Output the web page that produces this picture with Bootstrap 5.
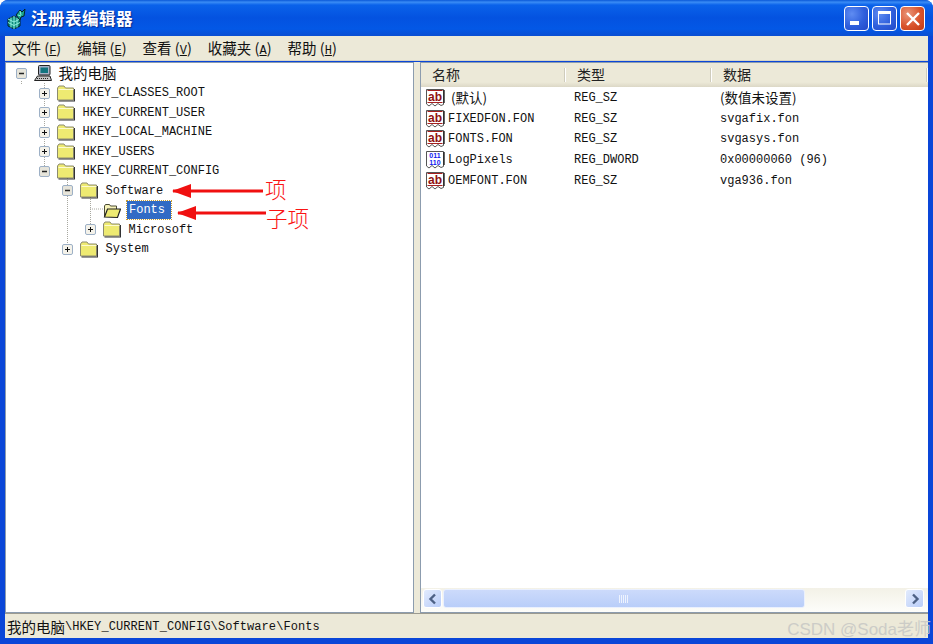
<!DOCTYPE html>
<html lang="zh">
<head>
<meta charset="utf-8">
<title>注册表编辑器</title>
<link href="https://cdn.jsdelivr.net/npm/bootstrap@5.3.0/dist/css/bootstrap.min.css" rel="stylesheet">
<style>
html,body{height:644px;overflow:hidden;background:#fff}
body{font-family:"Liberation Mono","Noto Sans CJK SC",monospace;font-size:12px;color:#111}
.cjk{font-family:"Noto Sans CJK SC",sans-serif}
.xpwin{height:644px;width:933px;position:relative;overflow:hidden;border-radius:8px 8px 0 0;
 background:#0a46d8;padding:0 5px 6px 5px}
.xptitle{height:36px;margin:0 -5px;padding:0 8px 0 7px;
 background:linear-gradient(180deg,#0a58d8 0,#3a8cf5 6%,#0a62ea 14%,#0452e0 50%,#0358e6 80%,#0a4ed2 100%);}
.xptitle .ttl{font-size:16.5px;font-weight:700;color:#fff;text-shadow:1px 1px 1px #0a2a90;margin-left:5px;letter-spacing:.5px;padding-top:1px}
.capbtn{width:25px;height:25px;border:1px solid #fff;border-radius:4px;margin-left:3px;
 background:radial-gradient(circle at 30% 30%,#5f8cf2 0,#2f5fdc 55%,#2148c8 100%)}
.capbtn.cls{background:radial-gradient(circle at 30% 30%,#e9967a 0,#d9532c 55%,#c23a14 100%)}
.xpmenu{height:25px;background:#ece9d8;padding-left:7px;font-size:14.5px;border-bottom:1px solid #d8d4c4;margin-bottom:1px}
.xpmenu span.mi{margin-right:16px;white-space:nowrap}
.xpmenu u{font-family:"Liberation Mono",monospace;font-size:12px}
.panes{height:551px;background:#ece9d8}
.leftpane{width:409px;background:#fff;border:1px solid #8c9cae;position:relative;padding-top:1px}
.rightpane{width:508px;margin-left:6px;background:#fff;border:1px solid #8c9cae;border-right:0;position:relative}
.trow{height:19.5px;white-space:nowrap}
.lv0{padding-left:10px}.lv1{padding-left:33px}.lv2{padding-left:56px}.lv3{padding-left:79px}
.exp{width:11px;height:11px;flex:none;margin-right:7px}
.exp.none{visibility:hidden}
.ticon{width:18px;height:17px;flex:none;margin-right:7.500px}
.sel{background:#316ac5;color:#fff;outline:1px dotted #c69a2e;padding:0 6px 0 2px;margin-left:-1.500px;line-height:18px}
.conn{position:absolute;left:0;top:0;pointer-events:none}
.lhead{height:24px;padding-bottom:2px;background:linear-gradient(180deg,#ece9d8 0,#ece9d8 80%,#dcd8c6 100%);font-size:14px;color:#222}
.hc{height:100%;padding-left:11px;position:relative}
.hc::after{content:"";position:absolute;right:0;top:5px;bottom:3px;width:2px;background:#cfccbc;border-right:1px solid #fff}
.h1c{width:145px}.h2c{width:146px}
.lrow{height:20.75px;white-space:nowrap}
.ric{width:21px;height:20px;flex:none;margin:0 2px 0 4px}
.cname{width:126px;flex:none}
.ctype{width:146px;flex:none}
.listbody{height:501px;padding-top:.5px}
.hscroll{height:24px;padding:0 4px 3px 2px;background:linear-gradient(180deg,#f3f1e7 0,#fdfdfa 100%)}
.sbtn{width:19px;height:19px;border:1px solid #fff;border-radius:3px;background:linear-gradient(135deg,#e2ebfd,#b9cdf8)}
.sthumb{width:362px;height:19px;margin-left:1px;border:1px solid #eaf0fe;border-radius:3px;background:linear-gradient(180deg,#ccdafb,#b9cef9)}
.xpstatus{height:25px;background:#ece9d8;padding-left:2px;padding-top:2px;border-top:1px solid #9b9a90}
.xpstatus .cjk{font-size:14.5px}
.xpstatus .stpath{letter-spacing:.08px}
.wmark{position:absolute;right:2px;bottom:2px;font-family:"Liberation Sans","Noto Sans CJK SC",sans-serif;font-size:17px;color:#c9c9c6;opacity:.9;white-space:nowrap}
.note{position:absolute;color:#fa1414;font-size:21.500px;font-weight:300;line-height:1}
.arrow{position:absolute;left:0;top:0;pointer-events:none}
.n1{left:259px;top:115px}
.n2{left:260px;top:144px}
.tree-root{font-size:14.5px;margin-left:-1px;margin-top:-2px}
.first-name{font-size:13.500px;padding-left:3px;margin-top:-2px}
.nodata{font-size:13.500px;margin-top:-2px}
</style>
</head>
<body>
<svg width="0" height="0" class="position-absolute">
<defs>
<symbol id="plus" viewBox="0 0 11 11"><rect x=".5" y=".5" width="10" height="10" rx="1.5" fill="#f4f2ea" stroke="#9db0c6"/><path d="M3 5.5h5M5.5 3v5" stroke="#111" stroke-width="1"/></symbol>
<symbol id="minus" viewBox="0 0 11 11"><rect x=".5" y=".5" width="10" height="10" rx="1.5" fill="#e6e4da" stroke="#9db0c6"/><path d="M3 5.5h5" stroke="#222" stroke-width="1.300"/></symbol>
<symbol id="folder" viewBox="0 0 18 17"><path d="M.5 15V3l1.500-2h5l1.500 2h8v12z" fill="#eeea72" stroke="#8c8b70"/><path d="M1.500 4.500h15" stroke="#fdfbd0"/><path d="M17.500 4v12H1.500" fill="none" stroke="#333" stroke-width="1.100"/></symbol>
<symbol id="folderopen" viewBox="0 0 18 17"><path d="M1.500 14V4l1-1.500h4l1 1.500h6v3" fill="#f6f2b8" stroke="#4a4a34"/><path d="M1.500 15l3-8h13l-3 8.500z" fill="#eeea72" stroke="#222" stroke-width="1.200"/></symbol>
<symbol id="pc" viewBox="0 0 18 17"><rect x="4.500" y=".5" width="11.500" height="9.500" rx="1" fill="#a9b2c6" stroke="#222"/><rect x="6.500" y="2.500" width="7.500" height="5.500" fill="#11747f"/><path d="M.5 15.500l3-4.500h12.500l1.500 4.500z" fill="#c4c4c4" stroke="#222"/><path d="M3 13.500h12" stroke="#222" stroke-dasharray="1 1"/></symbol>
<symbol id="abi" viewBox="0 0 21 20"><path d="M1.500 1.500h17v15l-2.500 1-3-2-3 2.500-3-2.500-3 2.500-2.500-2z" fill="#fff" stroke="#555"/><path d="M2.500 2.500h15M2.500 14.500h15" stroke="#a52020" stroke-width="1.200"/><path d="M19 2v13" stroke="#222" stroke-width="1.400"/><text x="10" y="12.500" text-anchor="middle" font-family="Liberation Sans,sans-serif" font-size="12" font-weight="700" fill="#8f1212">ab</text></symbol>
<symbol id="bini" viewBox="0 0 21 20"><path d="M1.500 1.500h17v15l-2.500 1-3-2-3 2.500-3-2.500-3 2.500-2.500-2z" fill="#fff" stroke="#555"/><path d="M19 2v13" stroke="#222" stroke-width="1.400"/><text x="10" y="8" text-anchor="middle" font-family="Liberation Sans,sans-serif" font-size="7" font-weight="700" fill="#1020f0">011</text><text x="10" y="14.500" text-anchor="middle" font-family="Liberation Sans,sans-serif" font-size="7" font-weight="700" fill="#1020f0">110</text></symbol>
</defs>
</svg>

<div class="xpwin d-flex flex-column">
  <div class="xptitle d-flex align-items-center">
    <svg width="19" height="21" viewBox="0 0 19 21"><path d="M1 11l6-3 6 3v7l-6 3-6-3z" fill="#0c8a7a" stroke="#03242a"/><path d="M1 14.500l6 3 6-3M7 8v13M4 9.500v10M10 9.500v10M1 11l6 3 6-3" stroke="#8ff0e0" fill="none"/><path d="M9 7l4-5 2 2 3-3-1 7-3 1-1 3z" fill="#1aa58c" stroke="#03242a"/><path d="M11 7l3 1M13 3l1 4" stroke="#8ff0e0"/></svg>
    <span class="ttl cjk">注册表编辑器</span>
    <div class="ms-auto d-flex">
      <div class="capbtn"><svg class="d-block" width="23" height="23" viewBox="0 0 23 23"><rect x="5" y="14" width="9" height="4" fill="#fff"/></svg></div>
      <div class="capbtn"><svg class="d-block" width="23" height="23" viewBox="0 0 23 23"><rect x="5.500" y="5" width="12" height="12" fill="none" stroke="#fff"/><rect x="5" y="4" width="13" height="3" fill="#fff"/></svg></div>
      <div class="capbtn cls"><svg class="d-block" width="23" height="23" viewBox="0 0 23 23"><path d="M6 6l12 12M18 6L6 18" stroke="#fff" stroke-width="2.400"/></svg></div>
    </div>
  </div>

  <div class="xpmenu d-flex align-items-center cjk">
    <span class="mi">文件 (<u>F</u>)</span>
    <span class="mi">编辑 (<u>E</u>)</span>
    <span class="mi">查看 (<u>V</u>)</span>
    <span class="mi">收藏夹 (<u>A</u>)</span>
    <span class="mi">帮助 (<u>H</u>)</span>
  </div>

  <div class="panes d-flex">
    <div class="leftpane">
      <svg class="conn" width="200" height="210" fill="none" stroke="#a8a8a0" stroke-dasharray="1 1">
        <path d="M38.500 20v90M38 30h6M38 49h6M38 69h6M38 88h6M38 108h6"/>
        <path d="M15.500 18v4M61.500 115v72M61 127h6M61 186h6M84.500 134v33M84 146h14M84 166h6"/>
      </svg>
      <div class="trow lv0 d-flex align-items-center position-relative"><svg class="exp"><use href="#minus"/></svg><svg class="ticon"><use href="#pc"/></svg><span class="cjk tree-root">我的电脑</span></div>
      <div class="trow lv1 d-flex align-items-center position-relative"><svg class="exp"><use href="#plus"/></svg><svg class="ticon"><use href="#folder"/></svg><span>HKEY_CLASSES_ROOT</span></div>
      <div class="trow lv1 d-flex align-items-center position-relative"><svg class="exp"><use href="#plus"/></svg><svg class="ticon"><use href="#folder"/></svg><span>HKEY_CURRENT_USER</span></div>
      <div class="trow lv1 d-flex align-items-center position-relative"><svg class="exp"><use href="#plus"/></svg><svg class="ticon"><use href="#folder"/></svg><span>HKEY_LOCAL_MACHINE</span></div>
      <div class="trow lv1 d-flex align-items-center position-relative"><svg class="exp"><use href="#plus"/></svg><svg class="ticon"><use href="#folder"/></svg><span>HKEY_USERS</span></div>
      <div class="trow lv1 d-flex align-items-center position-relative"><svg class="exp"><use href="#minus"/></svg><svg class="ticon"><use href="#folder"/></svg><span>HKEY_CURRENT_CONFIG</span></div>
      <div class="trow lv2 d-flex align-items-center position-relative"><svg class="exp"><use href="#minus"/></svg><svg class="ticon"><use href="#folder"/></svg><span>Software</span></div>
      <div class="trow lv3 d-flex align-items-center position-relative"><svg class="exp none"><use href="#plus"/></svg><svg class="ticon"><use href="#folderopen"/></svg><span class="sel">Fonts</span></div>
      <div class="trow lv3 d-flex align-items-center position-relative"><svg class="exp"><use href="#plus"/></svg><svg class="ticon"><use href="#folder"/></svg><span>Microsoft</span></div>
      <div class="trow lv2 d-flex align-items-center position-relative"><svg class="exp"><use href="#plus"/></svg><svg class="ticon"><use href="#folder"/></svg><span>System</span></div>

      <svg class="arrow" width="260" height="170">
        <path d="M167 128h90" stroke="#f01010" stroke-width="3"/><path d="M166 128l19-7v14z" fill="#f01010"/>
        <path d="M172 150h90" stroke="#f01010" stroke-width="3"/><path d="M171 150l19-7v14z" fill="#f01010"/>
      </svg>
      <span class="note cjk n1">项</span>
      <span class="note cjk n2">子项</span>
    </div>

    <div class="rightpane d-flex flex-column">
      <div class="lhead d-flex cjk">
        <div class="hc h1c d-flex align-items-center">名称</div>
        <div class="hc h2c d-flex align-items-center">类型</div>
        <div class="hc flex-fill d-flex align-items-center">数据</div>
      </div>
      <div class="listbody flex-fill">
        <div class="lrow d-flex align-items-center"><svg class="ric"><use href="#abi"/></svg><span class="cname cjk first-name">(默认)</span><span class="ctype">REG_SZ</span><span class="cjk nodata">(数值未设置)</span></div>
        <div class="lrow d-flex align-items-center"><svg class="ric"><use href="#abi"/></svg><span class="cname">FIXEDFON.FON</span><span class="ctype">REG_SZ</span><span>svgafix.fon</span></div>
        <div class="lrow d-flex align-items-center"><svg class="ric"><use href="#abi"/></svg><span class="cname">FONTS.FON</span><span class="ctype">REG_SZ</span><span>svgasys.fon</span></div>
        <div class="lrow d-flex align-items-center"><svg class="ric"><use href="#bini"/></svg><span class="cname">LogPixels</span><span class="ctype">REG_DWORD</span><span>0x00000060 (96)</span></div>
        <div class="lrow d-flex align-items-center"><svg class="ric"><use href="#abi"/></svg><span class="cname">OEMFONT.FON</span><span class="ctype">REG_SZ</span><span>vga936.fon</span></div>
      </div>
      <div class="hscroll d-flex align-items-center">
        <div class="sbtn d-flex align-items-center justify-content-center"><svg width="10" height="12" viewBox="0 0 10 12"><path d="M7 1.500L2.500 6 7 10.500" fill="none" stroke="#4d6185" stroke-width="2.400"/></svg></div>
        <div class="sthumb d-flex align-items-center justify-content-center"><svg width="10" height="8" viewBox="0 0 10 8"><path d="M.5 0v8M2.500 0v8M4.500 0v8M6.500 0v8M8.500 0v8" stroke="#eef3fe"/></svg></div>
        <div class="sbtn ms-auto d-flex align-items-center justify-content-center"><svg width="10" height="12" viewBox="0 0 10 12"><path d="M3 1.500L7.500 6 3 10.500" fill="none" stroke="#4d6185" stroke-width="2.400"/></svg></div>
      </div>
    </div>
  </div>

  <div class="xpstatus d-flex align-items-center"><span class="cjk">我的电脑</span><span class="stpath">\HKEY_CURRENT_CONFIG\Software\Fonts</span></div>
  <div class="wmark">CSDN @Soda老师</div>
</div>
</body>
</html>
